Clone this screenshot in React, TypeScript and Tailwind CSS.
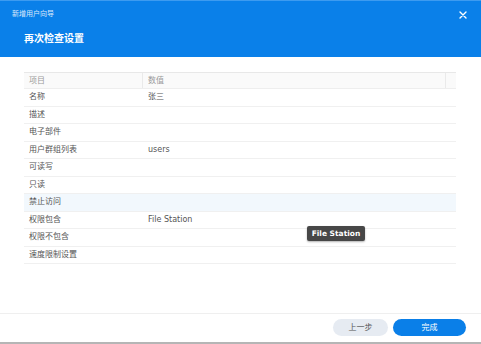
import React from "react";

const rows: [string, string][] = [
  ["名称", "张三"],
  ["描述", ""],
  ["电子部件", ""],
  ["用户群组列表", "users"],
  ["可读写", ""],
  ["只读", ""],
  ["禁止访问", ""],
  ["权限包含", "File Station"],
  ["权限不包含", ""],
  ["速度限制设置", ""],
];

export default function App() {
  return (
    <div className="relative w-[481px] h-[344px] bg-white flex flex-col overflow-hidden font-['DejaVu_Sans','Noto_Sans_CJK_SC',sans-serif]">
      <div className="h-[57px] bg-[#0a80e9] border-t border-[#3d9bf0] flex flex-col shrink-0">
        <div className="flex items-center justify-between pl-[12px] pr-[14px] pt-[6px] h-[20px]">
          <span className="text-[7px] leading-none text-[#dbe9fb]">新增用户向导</span>
          <svg width="8" height="8" viewBox="0 0 8 8" className="mt-[1px]">
            <path d="M1 1L7 7M7 1L1 7" stroke="white" strokeWidth="1.4" strokeLinecap="round" />
          </svg>
        </div>
        <div className="pl-[24px] pt-[13px] text-[10px] font-bold leading-none text-white">再次检查设置</div>
      </div>
      <div className="flex-1 pt-[15px] pl-[24px] pr-[25px]">
        <div className="flex h-[17px] border-t border-[#e8e8e8] border-b border-b-[#eeeeee] bg-[#fafafa] text-[8px] text-[#9a9a9a]">
          <div className="w-[119px] pl-[5px] flex items-center border-r border-[#eaeaea]">项目</div>
          <div className="flex-1 pl-[5px] flex items-center border-r border-[#eaeaea]">数值</div>
          <div className="w-[10px]" />
        </div>
        {rows.map(([k, v], i) => (
          <div
            key={k}
            className={`flex h-[17.5px] border-b border-[#f0f0f0] text-[8px] text-[#555] ${i === 6 ? "bg-[#f2f8fd]" : ""}`}
          >
            <div className="w-[119px] pl-[5px] flex items-center">{k}</div>
            <div className="flex-1 pl-[5px] flex items-center">{v}</div>
          </div>
        ))}
      </div>
      <div className="h-[31px] border-t border-[#efefef] border-b-2 border-b-[#b5b5b5] flex items-start justify-end gap-[5px] pr-[15px] pt-[5px] shrink-0">
        <button className="w-[55px] h-[17px] rounded-full bg-[#e6ebf2] text-[8px] text-[#555] flex items-center justify-center">上一步</button>
        <button className="w-[73px] h-[17px] rounded-full bg-[#0a7fe8] text-[8px] text-white flex items-center justify-center">完成</button>
      </div>
      <div className="absolute left-[307px] top-[226px] w-[58px] h-[15px] rounded-[2px] bg-[#474747] shadow-[0_1px_2px_rgba(0,0,0,0.3)] text-white text-[7.5px] font-bold flex items-center justify-center">File Station</div>
    </div>
  );
}
